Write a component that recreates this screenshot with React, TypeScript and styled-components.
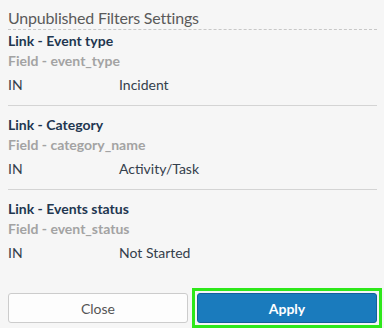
import React from "react";
import styled, { createGlobalStyle } from "styled-components";

const Global = createGlobalStyle`
  html, body { margin: 0; padding: 0; background: #f6f6f6; }
  body { font-family: Lato, "Noto Sans", sans-serif; }
`;

const Panel = styled.div`
  width: 384px;
  height: 328px;
  box-sizing: border-box;
  padding: 0 7px 0 8px;
  background: #f6f6f6;
  display: flex;
  flex-direction: column;
`;

const Title = styled.div`
  padding-top: 7px;
  line-height: 22px;
  font-size: 16px;
  letter-spacing: -0.2px;
  color: #5a5a5a;
  border-bottom: 1px dashed #c8c8c8;
`;

const Section = styled.div<{ $first?: boolean; $last?: boolean }>`
  padding-top: ${(p) => (p.$first ? 1 : 9)}px;
  padding-bottom: 10px;
  border-bottom: ${(p) => (p.$last ? "none" : "1px solid #d4d4d4")};
`;

const LinkName = styled.div`
  font-size: 14px;
  font-weight: 700;
  line-height: 20px;
  color: #1f3650;
`;

const FieldName = styled.div`
  font-size: 14px;
  font-weight: 700;
  line-height: 19px;
  color: #a3a3a3;
`;

const Row = styled.div`
  margin-top: 5px;
  display: grid;
  grid-template-columns: 111px 1fr;
  font-size: 14px;
  line-height: 20px;
  color: #34404c;
`;

const Footer = styled.div`
  margin-top: 20px;
  display: grid;
  grid-template-columns: 1fr 1fr;
  gap: 9px;
`;

const FocusFrame = styled.div`
  margin: -5px;
  padding: 2px;
  border: 3px solid #2ee81a;
  display: flex;
  flex-direction: column;
`;

const Button = styled.button<{ $primary?: boolean }>`
  height: 30px;
  box-sizing: border-box;
  border-radius: 3px;
  font-family: Lato, "Noto Sans", sans-serif;
  font-size: 14px;
  font-weight: ${(p) => (p.$primary ? 700 : 400)};
  color: ${(p) => (p.$primary ? "#ffffff" : "#555555")};
  background: ${(p) => (p.$primary ? "#1a7bbd" : "#fdfdfd")};
  border: 1px solid ${(p) => (p.$primary ? "#14609a" : "#cccccc")};
  outline: none;
  padding: 0;
  cursor: pointer;
`;

const filters = [
  { link: "Link - Event type", field: "Field - event_type", op: "IN", value: "Incident" },
  { link: "Link - Category", field: "Field - category_name", op: "IN", value: "Activity/Task" },
  { link: "Link - Events status", field: "Field - event_status", op: "IN", value: "Not Started" },
];

export default function App() {
  return (
    <>
      <Global />
      <Panel>
        <Title>Unpublished Filters Settings</Title>
        {filters.map((f, i) => (
          <Section key={f.link} $first={i === 0} $last={i === filters.length - 1}>
            <LinkName>{f.link}</LinkName>
            <FieldName>{f.field}</FieldName>
            <Row>
              <span>{f.op}</span>
              <span>{f.value}</span>
            </Row>
          </Section>
        ))}
        <Footer>
          <Button>Close</Button>
          <FocusFrame>
            <Button $primary>Apply</Button>
          </FocusFrame>
        </Footer>
      </Panel>
    </>
  );
}
